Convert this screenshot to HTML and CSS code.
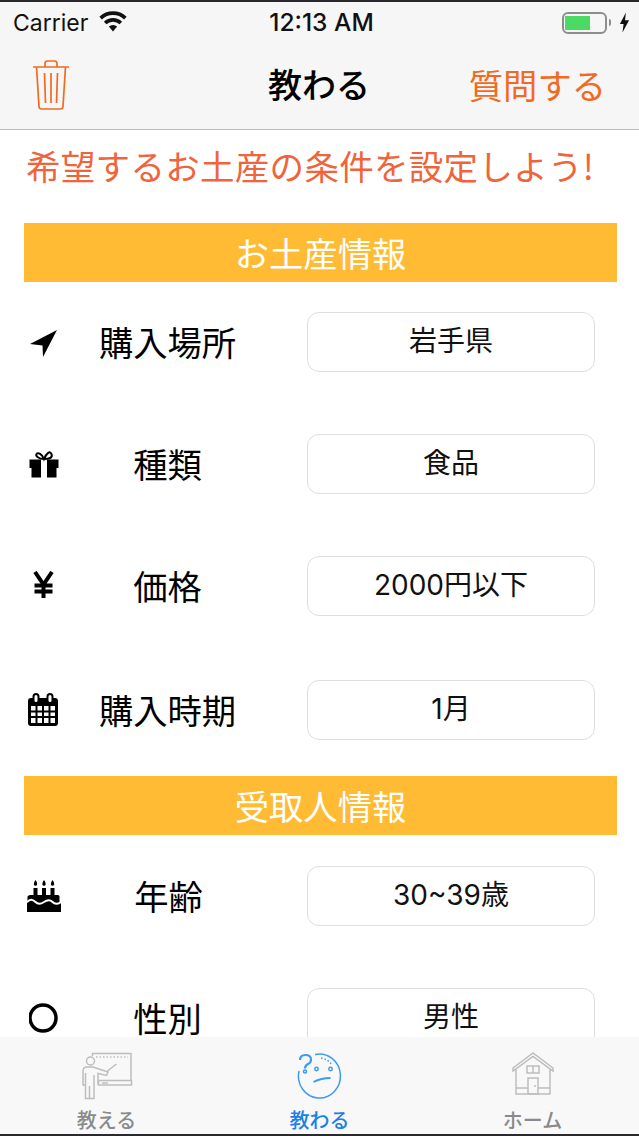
FILE: index.html
```html
<!DOCTYPE html>
<html lang="ja">
<head>
<meta charset="utf-8">
<title>教わる</title>
<link rel="stylesheet" href="styles.css">
</head>
<body>
<div class="app">
  <header class="chrome">
    <div class="status">
      <div class="status-left">
        <span>Carrier</span>
        <svg class="wifi" viewBox="0 0 24 18" width="30" height="22"><path d="M12 17.500 8.600 13.600a5 5 0 0 1 6.800 0z" fill="#111"/><path d="M5.600 10.600a9.300 9.300 0 0 1 12.800 0M1.900 6.600a14.600 14.600 0 0 1 20.200 0" fill="none" stroke="#111" stroke-width="3"/></svg>
      </div>
      <div class="status-time">12:13 AM</div>
      <div class="status-right">
        <div class="battery"><div class="battery-fill"></div></div>
        <div class="battery-tip"></div>
        <svg class="bolt" viewBox="0 0 12 22" width="11" height="21"><path d="M7.500 0 1 12.500h4L3.800 22 11 8.500H6.600z" fill="#111"/></svg>
      </div>
    </div>
    <div class="nav">
      <svg class="trash" viewBox="0 0 38 50" width="38" height="50" fill="none" stroke="#f26a21" stroke-width="1.700"><path d="M1 7h36M13 7V3.500Q13 1 15.500 1h7Q25 1 25 3.500V7M4.500 7l2.500 39.500q.2 2.500 2.500 2.500h19q2.300 0 2.500-2.500L33.500 7M12.500 13l1 30M19 13v30M25.500 13l-1 30"/></svg>
      <div class="nav-title">教わる</div>
      <div class="nav-action">質問する</div>
    </div>
  </header>
  <main class="content">
    <h1 class="lead">希望するお土産の条件を設定しよう!</h1>
    <section class="group group-gift">
      <h2 class="banner">お土産情報</h2>
      <div class="row">
        <svg class="icon" viewBox="0 0 30 30" width="30" height="30"><path d="M28 3 1 17l12.500 1.500L14 30z" fill="#000"/></svg>
        <div class="label">購入場所</div>
        <div class="field">岩手県</div>
      </div>
      <div class="row">
        <svg class="icon" viewBox="0 0 30 30" width="30" height="30"><path d="M.5 10.500h29V19H27.500v9.500H2.500V19H.5zM12 10.500h6v18h-6z" fill="#000" fill-rule="evenodd"/><path d="M15 10C13 5 9 3 7.500 5S10 10 15 10c5 0 9-1 7.500-5S17 5 15 10z" fill="none" stroke="#000" stroke-width="2"/></svg>
        <div class="label">種類</div>
        <div class="field">食品</div>
      </div>
      <div class="row row-before-last">
        <svg class="icon" viewBox="0 0 30 30" width="30" height="30"><path d="M6 1l8.500 12.500L23 1M14.500 13v14M5.500 14.500h18M5.500 20.500h18" fill="none" stroke="#000" stroke-width="4"/></svg>
        <div class="label">価格</div>
        <div class="field">2000円以下</div>
      </div>
      <div class="row row-last">
        <svg class="icon icon-large" viewBox="0 0 32 34" width="32" height="34"><rect x="1" y="5" width="30" height="28" rx="3" fill="#000"/><path d="M4 13h24v17H4z" fill="#fff"/><path d="M4 18.500h24M4 24h24M9.500 13v17M16 13v17M22.500 13v17" stroke="#000" stroke-width="2"/><rect x="6.500" y="1" width="5" height="9" rx="2.500" fill="#fff" stroke="#000" stroke-width="2"/><rect x="20.500" y="1" width="5" height="9" rx="2.500" fill="#fff" stroke="#000" stroke-width="2"/></svg>
        <div class="label">購入時期</div>
        <div class="field">1月</div>
      </div>
    </section>
    <section class="group group-person">
      <h2 class="banner">受取人情報</h2>
      <div class="row">
        <svg class="icon icon-large" viewBox="0 0 34 32" width="34" height="32"><path d="M6.500 8h4v10h-4zM15 8h4v10h-4zM23.500 8h4v10h-4z" fill="#000"/><path d="M8.500 0q2.200 2.500 1.700 4.500a1.800 1.800 0 0 1-3.400 0Q6.500 2.500 8.500 0zM17 0q2.200 2.500 1.700 4.500a1.800 1.800 0 0 1-3.400 0Q15 2.500 17 0zM25.500 0q2.200 2.500 1.700 4.500a1.800 1.800 0 0 1-3.400 0Q23.500 2.500 25.500 0z" fill="#000"/><path d="M3 15h28q1.500 0 1.500 1.500V32h-32V16.500Q1.500 15 3 15zM0 23h34v9H0z" fill="#000"/><path d="M0 22c3-3 5.500-3 8.500 0s5.500 2 8.500 0 5.500-3 8.500 0 5.500 2 8.500 0" fill="none" stroke="#fff" stroke-width="2"/></svg>
        <div class="label">年齢</div>
        <div class="field">30~39歳</div>
      </div>
      <div class="row">
        <svg class="icon" viewBox="0 0 30 30" width="30" height="30"><circle cx="14" cy="15" r="13" fill="none" stroke="#000" stroke-width="3.500"/></svg>
        <div class="label">性別</div>
        <div class="field">男性</div>
      </div>
    </section>
  </main>
  <nav class="tabbar">
    <div class="tab">
      <svg class="tab-icon" viewBox="0 0 54 50" width="54" height="50" fill="none" stroke="#bdbdbd" stroke-width="1.500"><path d="M12.500 5V2.500h38.500V29"/><path d="M16 6h32" stroke-dasharray="1.500 2"/><path d="M18.500 29.500h33v4.500h-33zM22 32h6"/><path d="M36.500 13l-9 7"/><circle cx="10.500" cy="10" r="4"/><path d="M3 20q0-4 4-4h6l15 5-1.500 3.500L18 22.500v11M3 20v14h2.500V22M5.500 34v13.500h4V35M9.500 47.500h4.500V24"/></svg>
      <span class="tab-label">教える</span>
    </div>
    <div class="tab tab-active">
      <svg class="tab-icon" viewBox="0 0 54 50" width="54" height="50" fill="none" stroke="#3d9bf0" stroke-width="1.500"><path d="M22 3.500A21 22 0 1 1 6 20"/><path d="M28 7q7 1 11 7" stroke-dasharray="1.500 2"/><path d="M7 9q0-5 5.500-5t5.500 4.500q0 3-3 4.500t-3 4.500" stroke-width="2.200"/><circle cx="12" cy="20.500" r="1.500"/><circle cx="23.500" cy="18" r="1.700"/><circle cx="37.500" cy="18" r="1.700"/><path d="M20.500 31Q28 27 37.500 27" stroke-width="1.800"/></svg>
      <span class="tab-label">教わる</span>
    </div>
    <div class="tab">
      <svg class="tab-icon" viewBox="0 0 54 50" width="54" height="50" fill="none" stroke="#bdbdbd" stroke-width="1.500"><path d="M7 17 27 2l20 15v3L27 5.500 7 20zM10 18.500V43h34V18.500M10 37h12M32 37h12"/><path d="M21 15h12v7H21zM27 15v7M22 27h10v16H22zM29 34v2"/></svg>
      <span class="tab-label">ホーム</span>
    </div>
  </nav>
</div>
</body>
</html>
```

FILE: styles.css
```css
* { box-sizing: border-box; }
html, body { margin: 0; padding: 0; background: #fff; }
body { font-family: "Noto Sans CJK JP", "Noto Sans", sans-serif; color: #000; }
.app {
  width: 639px;
  height: 1136px;
  overflow: hidden;
  display: flex;
  flex-direction: column;
  border-top: 2px solid #2a2a2e;
  border-bottom: 2px solid #2a2a2e;
}
.chrome {
  height: 128px;
  flex: none;
  background: #f6f6f7;
  border-bottom: 1px solid #bcbcbc;
}
.status {
  height: 40px;
  padding: 1px 9px 0 13px;
  display: grid;
  grid-template-columns: 1fr auto 1fr;
  align-items: center;
  font-family: Inter, Roboto, sans-serif;
  font-size: 23px;
  color: #111;
}
.status-left { display: flex; align-items: center; gap: 10px; }
.wifi { margin-top: -3px; }
.status-time { font-size: 24.500px; font-weight: 500; margin-top: -2px; }
.status-right { display: flex; align-items: center; justify-content: flex-end; }
.battery {
  width: 45px;
  height: 22px;
  border: 2px solid #8d8d8d;
  border-radius: 6px;
  padding: 2px 1px;
}
.battery-fill { width: 25px; height: 14px; background: #4cd964; }
.battery-tip { width: 2px; height: 7px; margin-left: 2px; background: #8d8d8d; border-radius: 0 2px 2px 0; }
.bolt { margin-left: 8px; }
.nav {
  height: 87px;
  padding: 18px 33px 0 32px;
  display: grid;
  grid-template-columns: 1fr auto 1fr;
  align-items: start;
}
.trash { display: block; }
.nav-title { font-size: 34px; line-height: 48px; font-weight: 500; }
.nav-action { font-size: 34.300px; line-height: 48px; color: #f26a21; justify-self: end; }
.content { flex: 1; min-height: 0; overflow: hidden; padding: 10px 22px 0 24px; }
.lead {
  margin: 0 0 33px;
  font-size: 34.500px;
  line-height: 50px;
  font-weight: 400;
  color: #f0643c;
  white-space: nowrap;
  letter-spacing: 0.300px;
  padding-left: 2px;
}
.banner {
  margin: 0 0 30px;
  height: 59px;
  background: #ffbb33;
  color: #fff;
  font-size: 34.300px;
  line-height: 59px;
  font-weight: 400;
  text-align: center;
}
.group-person { margin-top: 36px; }
.group-person .banner { margin-bottom: 31px; }
.row {
  display: flex;
  align-items: center;
  height: 60px;
  margin-bottom: 62px;
}
.row-before-last { margin-bottom: 64px; }
.row-last { margin-bottom: 0; }
.icon { flex: none; margin-left: 5px; }
.icon-large { margin-left: 3px; }
.label {
  flex: 1;
  text-align: center;
  font-size: 34.300px;
  line-height: 36px;
  padding-right: 31px;
  padding-bottom: 2px;
}
.field {
  flex: none;
  width: 288px;
  height: 60px;
  margin-right: 22px;
  border: 1px solid #dedee2;
  border-radius: 12px;
  text-align: center;
  font-family: Inter, "Noto Sans CJK JP", sans-serif;
  font-size: 28px;
  line-height: 56px;
  color: #111;
}
.tabbar {
  height: 97px;
  flex: none;
  background: #f8f8f9;
  display: grid;
  grid-template-columns: 1fr 1fr 1fr;
}
.tab {
  display: flex;
  flex-direction: column;
  align-items: center;
  padding-top: 14px;
  color: #8a8a8a;
}
.tab-icon { display: block; }
.tab-label { font-size: 20px; line-height: 30px; font-weight: 500; margin-top: 4px; }
.tab-active { color: #1a80e8; }
```
